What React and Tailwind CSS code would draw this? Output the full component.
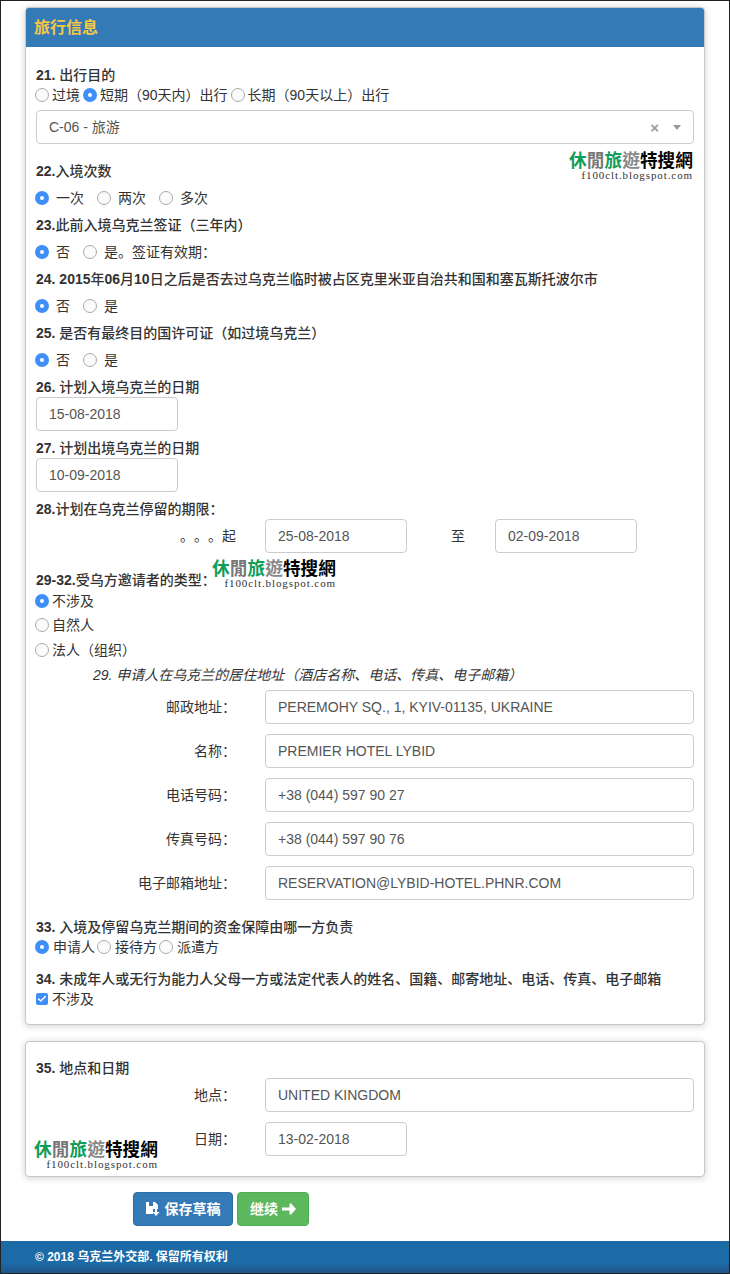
import { Check } from 'lucide-react';

const FONT = 'font-["Liberation_Sans","Noto_Sans_CJK_SC",sans-serif]';

const Label = ({ num, text, className = '' }) => (
  <div className={`h-5 leading-5 text-[#333] ${className}`}>
    <span className="font-bold">{num}</span>
    <span className="font-medium">{text}</span>
  </div>
);

const Radio = ({ checked }) =>
  checked ? (
    <span className="flex h-[14px] w-[14px] shrink-0 items-center justify-center rounded-full bg-[#3f8ff7]">
      <span className="h-[4px] w-[4px] rounded-full bg-white" />
    </span>
  ) : (
    <span className="h-[14px] w-[14px] shrink-0 rounded-full border border-[#aaa] bg-[#fbfbfb]" />
  );

const RadioRow = ({ items, textGap, gap, className = '' }) => (
  <div className={`-ml-px flex h-5 items-center text-[#333] ${gap} ${className}`}>
    {items.map(([text, checked]) => (
      <div key={text} className={`flex items-center ${textGap}`}>
        <Radio checked={checked} />
        <span className="leading-5">{text}</span>
      </div>
    ))}
  </div>
);

const TextBox = ({ value, className = 'w-[142px]' }) => (
  <input
    readOnly
    value={value}
    className={`h-[34px] rounded border border-[#ccc] bg-white px-3 text-sm text-[#555] outline-none ${className}`}
  />
);

const FieldRow = ({ label, value, boxClass }) => (
  <div className="flex h-[34px] items-center">
    <div className="w-[200px] text-right text-[#333]">{label}：</div>
    <TextBox value={value} className={`ml-[29px] ${boxClass}`} />
  </div>
);

const Watermark = ({ className }) => (
  <div className={`pointer-events-none absolute w-[124px] text-right ${className}`}>
    <div className='whitespace-nowrap font-["Noto_Sans_CJK_TC",serif] text-[17.7px] font-bold leading-[20px]'>
      <span className="text-[#0f9d58]">休</span>
      <span className="text-[#777]">閒</span>
      <span className="text-[#0f9d58]">旅</span>
      <span className="text-[#888]">遊</span>
      <span className="text-black">特搜網</span>
    </div>
    <div className='whitespace-nowrap font-["Liberation_Serif",serif] text-[11px] leading-[12px] tracking-[0.9px] text-[#333]'>
      f100clt.blogspot.com
    </div>
  </div>
);

const SaveIcon = () => (
  <svg width="14" height="14" viewBox="0 0 14 14" fill="#fff" className="shrink-0">
    <path d="M0 0h3v4h4V0h2l3 3v4H7v5H0z" />
    <path d="M9 7h2v3h2.500L10 14l-3.500-4H9z" />
  </svg>
);

const ArrowIcon = () => (
  <svg width="14" height="12" viewBox="0 0 14 12" fill="#fff" className="shrink-0">
    <path d="M0 4.500h7.500V1.200L8.700 0 14 6l-5.300 6-1.200-1.200V7.500H0z" />
  </svg>
);

export default function App() {
  return (
    <div className={`${FONT} relative min-h-[1274px] w-[730px] border border-[#222] bg-white text-sm`}>
      <div className="ml-[24px] mt-[6px] w-[680px] overflow-hidden rounded border border-[#c8c8c8] bg-white shadow-[0_1px_7px_rgba(0,0,0,0.2)]">
        <div className="flex h-[39px] items-center bg-[#337ab7] px-[8px] text-base font-bold text-[#f5c842]">旅行信息</div>

        <div className="relative px-[10px] pb-[15px] pt-[18px]">
          <Watermark className="right-[11px] top-[102px]" />
          <Watermark className="left-[186px] top-[510px]" />

          <Label num="21." text=" 出行目的" />
          <RadioRow
            textGap="gap-[3px]"
            gap="gap-[3px]"
            items={[['过境', false], ['短期（90天内）出行', true], ['长期（90天以上）出行', false]]}
          />
          <div className="mt-[5px] flex h-[34px] items-center rounded border border-[#ccc] pl-3 pr-[12px] text-[#555]">
            <span>C-06 - 旅游</span>
            <span className="ml-auto text-[15px] font-bold leading-none text-[#999]">×</span>
            <span className="ml-[14px] h-0 w-0 border-x-[4px] border-t-[5px] border-x-transparent border-t-[#999]" />
          </div>

          <Label num="22." text="入境次数" className="mt-[17px]" />
          <RadioRow className="mt-[7px]" textGap="gap-[7px]" gap="gap-[13px]" items={[['一次', true], ['两次', false], ['多次', false]]} />
          <Label num="23." text="此前入境乌克兰签证（三年内）" className="mt-[7px]" />
          <RadioRow className="mt-[7px]" textGap="gap-[7px]" gap="gap-[13px]" items={[['否', true], ['是。签证有效期：', false]]} />
          <div className="mt-[7px] h-5 font-medium leading-5 text-[#333]">
            <span className="font-bold">24. 2015</span>年<span className="font-bold">06</span>月<span className="font-bold">10</span>日之后是否去过乌克兰临时被占区克里米亚自治共和国和塞瓦斯托波尔市
          </div>
          <RadioRow className="mt-[7px]" textGap="gap-[7px]" gap="gap-[13px]" items={[['否', true], ['是', false]]} />
          <Label num="25." text=" 是否有最终目的国许可证（如过境乌克兰）" className="mt-[7px]" />
          <RadioRow className="mt-[7px]" textGap="gap-[7px]" gap="gap-[13px]" items={[['否', true], ['是', false]]} />

          <Label num="26." text=" 计划入境乌克兰的日期" className="mt-[7px]" />
          <TextBox value="15-08-2018" className="block w-[142px]" />
          <Label num="27." text=" 计划出境乌克兰的日期" className="mt-[7px]" />
          <TextBox value="10-09-2018" className="block w-[142px]" />
          <Label num="28." text="计划在乌克兰停留的期限：" className="mt-[7px]" />

          <div className="flex h-[34px] items-center">
            <div className="w-[200px] text-right text-[#333] [text-spacing-trim:space-all]">。。。起</div>
            <TextBox value="25-08-2018" className="ml-[29px] w-[142px]" />
            <div className="w-[88px] pl-[44px] text-[#333]">至</div>
            <TextBox value="02-09-2018" className="w-[142px]" />
          </div>

          <Label num="29-32." text="受乌方邀请者的类型：" className="mt-[17px]" />
          <RadioRow className="mt-px" textGap="gap-[3px]" gap="gap-0" items={[['不涉及', true]]} />
          <RadioRow className="mt-[4px]" textGap="gap-[3px]" gap="gap-0" items={[['自然人', false]]} />
          <RadioRow className="mt-[5px]" textGap="gap-[3px]" gap="gap-0" items={[['法人（组织）', false]]} />
          <div className="mt-[5px] h-5 pl-[57px] italic leading-5 text-[#333]">29. 申请人在乌克兰的居住地址（酒店名称、电话、传真、电子邮箱）</div>

          <div className="mt-[5px] flex flex-col gap-[10px]">
            <FieldRow label="邮政地址" value="PEREMOHY SQ., 1, KYIV-01135, UKRAINE" boxClass="w-[429px]" />
            <FieldRow label="名称" value="PREMIER HOTEL LYBID" boxClass="w-[429px]" />
            <FieldRow label="电话号码" value="+38 (044) 597 90 27" boxClass="w-[429px]" />
            <FieldRow label="传真号码" value="+38 (044) 597 90 76" boxClass="w-[429px]" />
            <FieldRow label="电子邮箱地址" value="RESERVATION@LYBID-HOTEL.PHNR.COM" boxClass="w-[429px]" />
          </div>

          <Label num="33." text=" 入境及停留乌克兰期间的资金保障由哪一方负责" className="mt-[17px]" />
          <RadioRow textGap="gap-[4px]" gap="gap-[2px]" items={[['申请人', true], ['接待方', false], ['派遣方', false]]} />
          <Label num="34." text=" 未成年人或无行为能力人父母一方或法定代表人的姓名、国籍、邮寄地址、电话、传真、电子邮箱" className="mt-[12px]" />
          <div className="flex h-5 items-center gap-[4px] text-[#333]">
            <span className="flex h-[12px] w-[12px] items-center justify-center rounded-[2px] bg-[#3f8ff7]">
              <Check size={10} strokeWidth={3.5} color="#fff" />
            </span>
            <span>不涉及</span>
          </div>
        </div>
      </div>

      <div className="relative ml-[24px] mt-[16px] h-[136px] w-[680px] rounded border border-[#c8c8c8] bg-white px-[10px] pt-[16px] shadow-[0_1px_7px_rgba(0,0,0,0.2)]">
        <Watermark className="left-[8px] top-[96px]" />
        <Label num="35." text=" 地点和日期" />
        <div className="flex flex-col gap-[10px]">
          <FieldRow label="地点" value="UNITED KINGDOM" boxClass="w-[429px]" />
          <FieldRow label="日期" value="13-02-2018" boxClass="w-[142px]" />
        </div>
      </div>

      <div className="ml-[132px] mt-[15px] flex gap-[4px]">
        <button className="flex h-[34px] w-[100px] items-center justify-center gap-[5px] rounded border border-[#2e6da4] bg-[#337ab7] font-bold text-white">
          <SaveIcon />
          保存草稿
        </button>
        <button className="flex h-[34px] w-[72px] items-center justify-center gap-[4px] rounded border border-[#4cae4c] bg-[#5cb85c] font-bold text-white">
          继续
          <ArrowIcon />
        </button>
      </div>

      <div className="mt-[15px] flex h-[32px] items-center bg-gradient-to-b from-[#1c6aa6] from-70% to-[#1f5488] pl-[34px] text-xs font-bold text-white">
        © 2018 乌克兰外交部. 保留所有权利
      </div>
    </div>
  );
}
